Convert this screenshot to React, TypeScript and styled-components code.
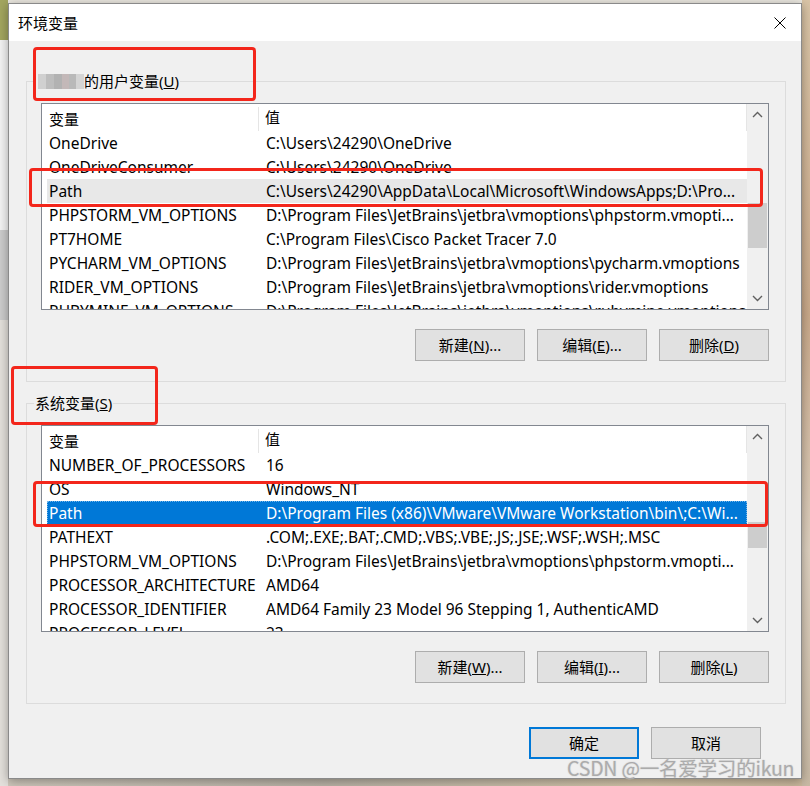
import React from "react";
import styled, { createGlobalStyle, css } from "styled-components";

const FONT = `"Noto Sans", "Noto Sans CJK SC", sans-serif`;

const GlobalStyle = createGlobalStyle`
  html, body { margin: 0; padding: 0; }
  body { width: 810px; height: 786px; overflow: hidden; font-family: ${FONT}; }
  * { box-sizing: border-box; }
`;

const Desktop = styled.div`
  position: relative;
  width: 810px;
  height: 786px;
  overflow: hidden;
  padding: 3px 8px 0 8px;
  background:
    linear-gradient(#a3a65f, #a3a65f) 0 0 / 8px 40px no-repeat,
    linear-gradient(#f4f4f4, #f4f4f4) 0 40px / 8px 190px no-repeat,
    linear-gradient(#cdcdcd, #cdcdcd) 0 230px / 8px 90px no-repeat,
    linear-gradient(#e4e1dc, #e4e1dc) 0 320px / 8px 466px no-repeat,
    linear-gradient(180deg, #d9c4a6, #c9a98a 40%, #ddd0bf 70%, #c8b9a4) 802px 0 / 8px 786px no-repeat,
    linear-gradient(90deg, #cfc8bc, #b9b2a6 40%, #d2c3a8 80%, #c9b79c) 0 778px / 810px 8px no-repeat,
    #ece9e1;
`;

const Dialog = styled.div`
  width: 794px;
  height: 776px;
  border: 1px solid #8a8a8a;
  background: #f0f0f0;
  display: flex;
  flex-direction: column;
  box-shadow: 0 2px 10px rgba(0, 0, 0, 0.35);
`;

const TitleBar = styled.div`
  height: 37px;
  flex-shrink: 0;
  background: #ffffff;
  display: flex;
  align-items: center;
  justify-content: space-between;
  padding: 0 15px 0 9px;
`;

const TitleText = styled.div`
  font-size: 15px;
  line-height: 20px;
  color: #000;
`;

const CloseIcon = styled.svg`
  width: 12px;
  height: 12px;
  display: block;
`;

const Body = styled.div`
  flex: 1;
  padding: 40px 15px 0 17px;
  display: flex;
  flex-direction: column;
`;

const Group = styled.section<{ $gap?: number }>`
  border: 1px solid #dcdcdc;
  padding: 0 16px 20px 14px;
  margin-top: ${(p) => p.$gap ?? 0}px;
`;

const GroupLabel = styled.div`
  margin: -11px 0 0 -7px;
  padding: 0 1px;
  width: fit-content;
  background: #f0f0f0;
  font-size: 15px;
  line-height: 20px;
  height: 20px;
  color: #000;
  display: flex;
  align-items: center;
  white-space: nowrap;
`;

const Blur = styled.span`
  display: inline-block;
  width: 46px;
  height: 15px;
  margin-left: 3px;
  background: linear-gradient(
    90deg,
    #d0d0d0 0 8px,
    #bdbdbd 8px 16px,
    #b2b2b2 16px 24px,
    #c3b8b8 24px 31px,
    #b9b9b9 31px 38px,
    #d4d4d4 38px 46px
  );
`;

const ListBox = styled.div`
  margin-top: 12px;
  height: 207px;
  border: 1px solid #828790;
  background: #ffffff;
  display: flex;
  overflow: hidden;
`;

const ListMain = styled.div`
  flex: 1;
  min-width: 0;
  display: flex;
  flex-direction: column;
  overflow: hidden;
`;

const HeaderRow = styled.div`
  height: 27px;
  flex-shrink: 0;
  display: grid;
  grid-template-columns: 217px 1fr;
  border-right: 1px solid #e5e5e5;
`;

const HeaderCell = styled.div<{ $first?: boolean }>`
  font-size: 15px;
  line-height: 27px;
  color: #000;
  padding-left: ${(p) => (p.$first ? 7 : 6)}px;
  ${(p) =>
    p.$first &&
    css`
      border-right: 1px solid #e5e5e5;
      margin: 3px 0 0 0;
      line-height: 24px;
    `}
`;

const Row = styled.div<{ $state?: "active" | "inactive" }>`
  height: 24px;
  flex-shrink: 0;
  margin-left: 5px;
  padding-left: 2px;
  display: grid;
  grid-template-columns: 217px 1fr;
  font-size: 15.5px;
  line-height: 24px;
  color: #000;
  white-space: nowrap;
  ${(p) =>
    p.$state === "inactive" &&
    css`
      background: #e8e8e8;
    `}
  ${(p) =>
    p.$state === "active" &&
    css`
      background: #0078d7;
      color: #ffffff;
      outline: 1px dotted rgba(255, 255, 255, 0.45);
      outline-offset: -1px;
    `}
`;

const Cell = styled.span`
  overflow: hidden;
  white-space: nowrap;
`;

const ScrollBar = styled.div`
  width: 21px;
  flex-shrink: 0;
  background: #f0f0f0;
  display: flex;
  flex-direction: column;
`;

const ArrowBox = styled.div`
  height: 21px;
  flex-shrink: 0;
  display: flex;
  align-items: center;
  justify-content: center;
`;

const Track = styled.div`
  flex: 1;
  display: flex;
  flex-direction: column;
`;

const Thumb = styled.div<{ $top: number; $height: number }>`
  margin: ${(p) => p.$top}px 1px 0 1px;
  height: ${(p) => p.$height}px;
  background: #cdcdcd;
`;

const ButtonRow = styled.div<{ $top: number; $right?: number }>`
  display: flex;
  justify-content: flex-end;
  gap: 12px;
  margin-top: ${(p) => p.$top}px;
  margin-right: ${(p) => p.$right ?? 0}px;
`;

const Button = styled.button<{ $default?: boolean }>`
  width: 110px;
  height: 32px;
  padding: 0;
  background: #e1e1e1;
  border: 1px solid #adadad;
  font-family: ${FONT};
  font-size: 15px;
  line-height: 20px;
  color: #000;
  ${(p) =>
    p.$default &&
    css`
      border: 2px solid #0078d7;
    `}
`;

const Annot = styled.div<{ $x: number; $y: number; $w: number; $h: number }>`
  position: absolute;
  left: ${(p) => p.$x}px;
  top: ${(p) => p.$y}px;
  width: ${(p) => p.$w}px;
  height: ${(p) => p.$h}px;
  border: 3px solid #f3261b;
  border-radius: 4px;
  pointer-events: none;
`;

const Watermark = styled.div`
  position: absolute;
  left: 567px;
  top: 754px;
  font-family: "Noto Sans CJK SC", sans-serif;
  font-size: 19.5px;
  line-height: 28px;
  color: rgba(150, 150, 150, 0.75);
  text-shadow: 0 0 1px rgba(255, 255, 255, 0.9), 0 0 1px rgba(90, 90, 90, 0.6);
  white-space: nowrap;
  letter-spacing: -0.2px;
`;

type Item = { name: string; value: string; state?: "active" | "inactive" };

const userVars: Item[] = [
  { name: "OneDrive", value: String.raw`C:\Users\24290\OneDrive` },
  { name: "OneDriveConsumer", value: String.raw`C:\Users\24290\OneDrive` },
  {
    name: "Path",
    value: String.raw`C:\Users\24290\AppData\Local\Microsoft\WindowsApps;D:\Pro...`,
    state: "inactive",
  },
  {
    name: "PHPSTORM_VM_OPTIONS",
    value: String.raw`D:\Program Files\JetBrains\jetbra\vmoptions\phpstorm.vmopti...`,
  },
  { name: "PT7HOME", value: String.raw`C:\Program Files\Cisco Packet Tracer 7.0` },
  {
    name: "PYCHARM_VM_OPTIONS",
    value: String.raw`D:\Program Files\JetBrains\jetbra\vmoptions\pycharm.vmoptions`,
  },
  {
    name: "RIDER_VM_OPTIONS",
    value: String.raw`D:\Program Files\JetBrains\jetbra\vmoptions\rider.vmoptions`,
  },
  {
    name: "RUBYMINE_VM_OPTIONS",
    value: String.raw`D:\Program Files\JetBrains\jetbra\vmoptions\rubymine.vmoptions`,
  },
];

const sysVars: Item[] = [
  { name: "NUMBER_OF_PROCESSORS", value: "16" },
  { name: "OS", value: "Windows_NT" },
  {
    name: "Path",
    value: String.raw`D:\Program Files (x86)\VMware\VMware Workstation\bin\;C:\Wi...`,
    state: "active",
  },
  { name: "PATHEXT", value: ".COM;.EXE;.BAT;.CMD;.VBS;.VBE;.JS;.JSE;.WSF;.WSH;.MSC" },
  {
    name: "PHPSTORM_VM_OPTIONS",
    value: String.raw`D:\Program Files\JetBrains\jetbra\vmoptions\phpstorm.vmopti...`,
  },
  { name: "PROCESSOR_ARCHITECTURE", value: "AMD64" },
  { name: "PROCESSOR_IDENTIFIER", value: "AMD64 Family 23 Model 96 Stepping 1, AuthenticAMD" },
  { name: "PROCESSOR_LEVEL", value: "23" },
];

const Chevron = ({ up }: { up?: boolean }) => (
  <svg width="11" height="7" viewBox="0 0 11 7">
    <path
      d={up ? "M1 6 L5.5 1.5 L10 6" : "M1 1 L5.5 5.5 L10 1"}
      fill="none"
      stroke="#606060"
      strokeWidth="1.4"
    />
  </svg>
);

const VarList = ({
  items,
  thumbTop,
  thumbHeight,
}: {
  items: Item[];
  thumbTop: number;
  thumbHeight: number;
}) => (
  <ListBox>
    <ListMain>
      <HeaderRow>
        <HeaderCell $first>变量</HeaderCell>
        <HeaderCell>值</HeaderCell>
      </HeaderRow>
      {items.map((it, i) => (
        <Row key={i} $state={it.state}>
          <Cell>{it.name}</Cell>
          <Cell>{it.value}</Cell>
        </Row>
      ))}
    </ListMain>
    <ScrollBar>
      <ArrowBox>
        <Chevron up />
      </ArrowBox>
      <Track>
        <Thumb $top={thumbTop} $height={thumbHeight} />
      </Track>
      <ArrowBox>
        <Chevron />
      </ArrowBox>
    </ScrollBar>
  </ListBox>
);

export default function App() {
  return (
    <>
      <GlobalStyle />
      <Desktop>
        <Dialog>
          <TitleBar>
            <TitleText>环境变量</TitleText>
            <CloseIcon viewBox="0 0 12 12">
              <path d="M0.5 0.5 L11.5 11.5 M11.5 0.5 L0.5 11.5" stroke="#000" strokeWidth="1" />
            </CloseIcon>
          </TitleBar>
          <Body>
            <Group>
              <GroupLabel>
                <Blur />
                的用户变量(<u>U</u>)
              </GroupLabel>
              <VarList items={userVars} thumbTop={78} thumbHeight={45} />
              <ButtonRow $top={19}>
                <Button>
                  新建(<u>N</u>)...
                </Button>
                <Button>
                  编辑(<u>E</u>)...
                </Button>
                <Button>
                  删除(<u>D</u>)
                </Button>
              </ButtonRow>
            </Group>
            <Group $gap={21}>
              <GroupLabel>
                系统变量(<u>S</u>)
              </GroupLabel>
              <VarList items={sysVars} thumbTop={75} thumbHeight={26} />
              <ButtonRow $top={19}>
                <Button>
                  新建(<u>W</u>)...
                </Button>
                <Button>
                  编辑(<u>I</u>)...
                </Button>
                <Button>
                  删除(<u>L</u>)
                </Button>
              </ButtonRow>
            </Group>
            <ButtonRow $top={23} $right={25}>
              <Button $default>确定</Button>
              <Button>取消</Button>
            </ButtonRow>
          </Body>
        </Dialog>
        <Annot $x={33} $y={47} $w={223} $h={54} />
        <Annot $x={29} $y={168} $w={734} $h={39} />
        <Annot $x={11} $y={366} $w={147} $h={59} />
        <Annot $x={33} $y={481} $w={735} $h={46} />
        <Watermark>CSDN @一名爱学习的ikun</Watermark>
      </Desktop>
    </>
  );
}
